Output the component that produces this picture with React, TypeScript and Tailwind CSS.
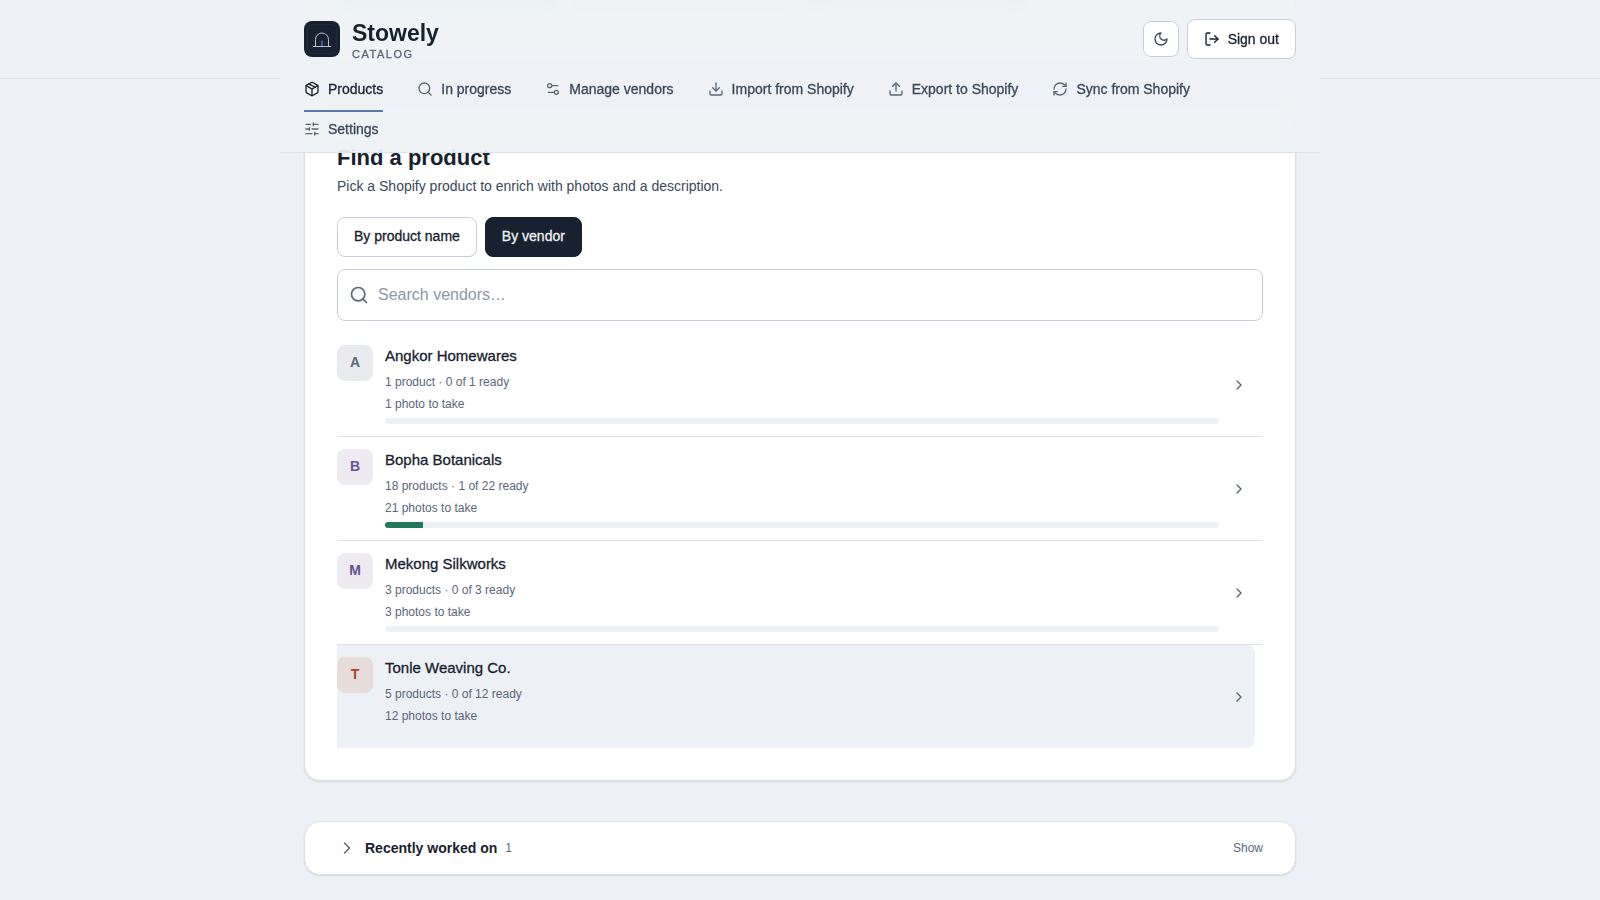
import {
  ChevronRight,
  Download,
  LogOut,
  Package,
  RefreshCw,
  Search,
  Settings2,
  SlidersHorizontal,
  Upload,
} from "lucide-react";
import { useState } from "react";

const tabs = [
  { label: "Products", icon: Package },
  { label: "In progress", icon: Search },
  { label: "Manage vendors", icon: Settings2 },
  { label: "Import from Shopify", icon: Download },
  { label: "Export to Shopify", icon: Upload },
  { label: "Sync from Shopify", icon: RefreshCw },
  { label: "Settings", icon: SlidersHorizontal },
];

const modes = [
  { id: "name", label: "By product name" },
  { id: "vendor", label: "By vendor" },
];

const vendors = [
  { name: "Angkor Homewares", products: 1, ready: 0, total: 1, photos: 1, tone: "bg-[#e9ebef] text-[#5b6679]" },
  { name: "Bopha Botanicals", products: 18, ready: 1, total: 22, photos: 21, tone: "bg-[#edeaf1] text-[#645490]" },
  { name: "Mekong Silkworks", products: 3, ready: 0, total: 3, photos: 3, tone: "bg-[#edeaf1] text-[#645490]" },
  { name: "Tonle Weaving Co.", products: 5, ready: 0, total: 12, photos: 12, tone: "bg-[#e6dcda] text-[#a8452f]" },
];

const plural = (n: number, word: string) => `${n} ${word}${n === 1 ? "" : "s"}`;

const card =
  "rounded-2xl border border-[#dae1e9] bg-white shadow-[0_1px_2px_rgba(24,33,47,0.12)]";

// Liberation Sans has no medium weight, a thin stroke stands in for it
const medium = "[-webkit-text-stroke:0.3px]";

function Logo() {
  return (
    <svg viewBox="0 0 36 36" className="size-9 shrink-0" fill="none" aria-hidden="true">
      <rect width="36" height="36" rx="8" fill="#18212f" />
      <rect x="3.5" y="3.5" width="29" height="29" rx="5" stroke="#1f2b3c" />
      <path d="M11.5 25v-6.500a6.500 6.500 0 0 1 13 0V25M9 25.500h18" stroke="#b9c0c9" />
      <path d="M18 19.500V25" stroke="#3f5f8a" strokeWidth="2" />
    </svg>
  );
}

function MoonIcon() {
  return (
    <svg
      viewBox="0 0 24 24"
      className="size-4"
      fill="none"
      stroke="currentColor"
      strokeWidth="2"
      strokeLinecap="round"
      strokeLinejoin="round"
      aria-hidden="true"
    >
      <path d="M12 3a6 6 0 0 0 9 9 9 9 0 1 1-9-9Z" />
    </svg>
  );
}

function Header() {
  const [active, setActive] = useState("Products");

  return (
    <header className="fixed inset-x-0 top-0 z-10 h-[79px] border-b border-[#dae1e9]">
      <div className="mx-auto max-w-[1040px] border-b border-[#dae1e9] bg-[#edf1f5]/85 px-6 backdrop-blur-md">
        <div className="flex items-center justify-between pt-[17px] pb-[11px]">
          <div className="flex items-center gap-3">
            <Logo />
            <div className="pt-0.5">
              <div className="text-[23px] leading-7 font-bold">Stowely</div>
              <div className={`text-[11px] leading-[14px] tracking-[0.14em] text-[#5b6679] ${medium}`}>CATALOG</div>
            </div>
          </div>
          <div className="flex items-center gap-2">
            <button
              aria-label="Dark mode"
              className="flex size-9 items-center justify-center rounded-lg border border-[#c5cfdc] bg-white text-[#3b485b]"
            >
              <MoonIcon />
            </button>
            <button
              className={`flex h-10 items-center gap-2 rounded-lg border border-[#c5cfdc] bg-white px-4 text-sm ${medium}`}
            >
              <LogOut size={16} />
              Sign out
            </button>
          </div>
        </div>
        <nav className="flex flex-wrap gap-x-[34px]">
          {tabs.map(({ label, icon: Icon }) => (
            <a
              key={label}
              href="#"
              onClick={() => setActive(label)}
              className={`flex h-10 items-center gap-2 border-b-2 pb-1 text-sm ${medium} ${
                label === active ? "border-[#587aa8] text-[#18212f]" : "border-transparent text-[#3b485b]"
              }`}
            >
              <Icon size={16} strokeWidth={2} className={label === active ? "" : "text-[#5b6679]"} />
              {label}
            </a>
          ))}
        </nav>
      </div>
    </header>
  );
}

function VendorRow({ vendor, highlighted }: { vendor: (typeof vendors)[number]; highlighted: boolean }) {
  const { name, products, ready, total, photos, tone } = vendor;

  return (
    <li className="pr-2">
      <button
        className={`flex w-full items-start gap-3 rounded-r-lg py-3 pr-2 text-left ${
          highlighted ? "bg-[#edf1f5]" : ""
        }`}
      >
        <span className={`flex size-9 items-center justify-center rounded-lg pb-0.5 text-sm font-bold ${tone}`}>
          {name[0]}
        </span>
        <span className="flex flex-1 flex-col">
          <span className={`text-[15px] leading-[22px] ${medium}`}>{name}</span>
          <span className="mt-1 text-xs leading-[22px] text-[#5b6679]">
            {plural(products, "product")} · {ready} of {total} ready
          </span>
          <span className="text-xs leading-[22px] text-[#5b6679]">{plural(photos, "photo")} to take</span>
          <span className="mt-[3px] block h-1.5 overflow-hidden rounded-full bg-[#edf1f5]">
            <span className="block h-full bg-[#217a5b]" style={{ width: `${(ready / total) * 100}%` }} />
          </span>
        </span>
        <ChevronRight size={16} className="self-center text-[#5b6679]" />
      </button>
    </li>
  );
}

export default function App() {
  const [mode, setMode] = useState("vendor");

  return (
    <div
      className="min-h-screen bg-[#edf1f5] text-[#18212f]"
      style={{ fontFamily: '"Liberation Sans", Arial, sans-serif' }}
    >
      <Header />
      <main className="mx-auto flex max-w-[1040px] flex-col gap-10 px-6 pb-6">
        {/* Summary tiles, scrolled under the header */}
        <section className={`${card} grid grid-cols-4 gap-4 rounded-t-none border-t-0 px-8 pb-[52px]`}>
          <div className="h-3 rounded-b-lg bg-[#d9ebe8]" />
          <div className="h-3 rounded-b-lg bg-[#f1eadc]" />
          <div className="h-3 rounded-b-lg bg-[#ece6ec]" />
        </section>

        {/* Find a product */}
        <section className={`${card} p-8`}>
          <h2 className="mt-1 text-[22px] leading-8 font-bold">Find a product</h2>
          <p className="text-sm leading-6 text-[#3b485b]">
            Pick a Shopify product to enrich with photos and a description.
          </p>
          <div className="mt-[19px] flex gap-2">
            {modes.map(({ id, label }) => (
              <button
                key={id}
                onClick={() => setMode(id)}
                className={`h-10 rounded-lg border px-4 pb-0.5 text-sm ${medium} ${
                  mode === id ? "border-[#18212f] bg-[#18212f] text-[#edf1f5]" : "border-[#c5cfdc] bg-white"
                }`}
              >
                {label}
              </button>
            ))}
          </div>
          <label className="mt-3 flex h-[52px] items-center gap-[9px] rounded-lg border border-[#c5cfdc] px-[11px]">
            <Search size={20} className="text-[#5b6679]" />
            <input
              aria-label="Search vendors"
              placeholder="Search vendors…"
              className="flex-1 text-base outline-none placeholder:text-[#8d97a7]"
            />
          </label>

          <ul className="mt-3 divide-y divide-[#dae1e9]">
            {vendors.map((vendor) => (
              <VendorRow key={vendor.name} vendor={vendor} highlighted={vendor.name === "Tonle Weaving Co."} />
            ))}
          </ul>
        </section>

        {/* Recently worked on */}
        <section className={`${card} px-8`}>
          <button className="flex h-[52px] w-full items-center gap-2 text-left">
            <ChevronRight size={20} strokeWidth={1.75} className="text-[#5b6679]" />
            <span className="text-sm font-bold">Recently worked on</span>
            <span className="text-xs text-[#5b6679]">1</span>
            <span className="ml-auto text-xs text-[#5b6679]">Show</span>
          </button>
        </section>
      </main>
    </div>
  );
}
